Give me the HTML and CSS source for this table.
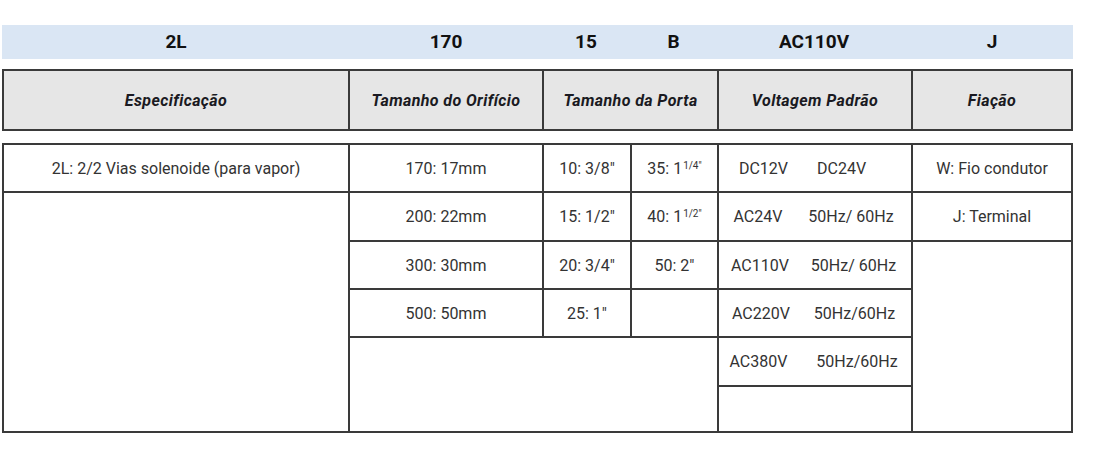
FILE: index.html
```html
<!DOCTYPE html>
<html lang="pt">
<head>
<meta charset="utf-8">
<title>Código do produto</title>
<link rel="stylesheet" href="styles.css">
</head>
<body>
<div class="code-bar">
  <div class="code">2L</div>
  <div class="code">170</div>
  <div class="code">15</div>
  <div class="code">B</div>
  <div class="code">AC110V</div>
  <div class="code">J</div>
</div>

<div class="grid head">
  <div class="cell th">Especificação</div>
  <div class="cell th">Tamanho do Orifício</div>
  <div class="cell th span2">Tamanho da Porta</div>
  <div class="cell th">Voltagem Padrão</div>
  <div class="cell th">Fiação</div>
</div>

<div class="grid body">
  <div class="cell c1 r1">2L: 2/2 Vias solenoide (para vapor)</div>
  <div class="cell c1 r2-end"></div>

  <div class="cell c2 r1">170: 17mm</div>
  <div class="cell c2 r2">200: 22mm</div>
  <div class="cell c2 r3">300: 30mm</div>
  <div class="cell c2 r4">500: 50mm</div>

  <div class="cell c3 r1">10: 3/8"</div>
  <div class="cell c3 r2">15: 1/2"</div>
  <div class="cell c3 r3">20: 3/4"</div>
  <div class="cell c3 r4">25: 1"</div>

  <div class="cell c4 r1">35: 1<sup class="frac">1/4"</sup></div>
  <div class="cell c4 r2">40: 1<sup class="frac">1/2"</sup></div>
  <div class="cell c4 r3">50: 2"</div>
  <div class="cell c4 r4"></div>

  <div class="cell c2-4 r5-6"></div>

  <div class="cell c5 r1 volt volt-dc"><span>DC12V</span><span>DC24V</span></div>
  <div class="cell c5 r2 volt volt-g26"><span>AC24V</span><span>50Hz/ 60Hz</span></div>
  <div class="cell c5 r3 volt volt-g22"><span>AC110V</span><span>50Hz/ 60Hz</span></div>
  <div class="cell c5 r4 volt volt-g24"><span>AC220V</span><span>50Hz/60Hz</span></div>
  <div class="cell c5 r5 volt volt-g29"><span>AC380V</span><span>50Hz/60Hz</span></div>
  <div class="cell c5 r6"></div>

  <div class="cell c6 r1">W: Fio condutor</div>
  <div class="cell c6 r2">J: Terminal</div>
  <div class="cell c6 r3-6"></div>
</div>
</body>
</html>
```

FILE: styles.css
```css
html, body {
  margin: 0;
  padding: 0;
  background: #ffffff;
}

body {
  font-family: Roboto, "Liberation Sans", Arial, sans-serif;
  color: #333333;
}

.code-bar {
  margin: 25px 0 0 2px;
  width: 1071px;
  height: 34px;
  background: #dae6f4;
  display: grid;
  grid-template-columns: 348px 192px 88px 87px 194px 162px;
  align-items: center;
}

.code {
  text-align: center;
  font-weight: 700;
  font-size: 19px;
  color: #111111;
  line-height: 34px;
}

.grid {
  margin-left: 2px;
  width: 1071px;
  box-sizing: border-box;
  display: grid;
  grid-template-columns: 344px 192px 86px 85px 192px 158px;
  gap: 2px;
  padding: 2px;
  background: #3a3a3a;
}

.head {
  margin-top: 10px;
  grid-template-rows: 58px;
}

.body {
  margin-top: 12px;
  grid-template-rows: 46px 47px 46px 46px 47px 44px;
}

.cell {
  background: #ffffff;
  display: flex;
  align-items: center;
  justify-content: center;
  font-size: 16px;
  white-space: nowrap;
}

.th {
  background: #e6e6e6;
  font-weight: 700;
  font-style: italic;
  font-size: 16px;
  letter-spacing: 0.4px;
  color: #1a1a22;
}

.span2 { grid-column: span 2; }

.c1 { grid-column: 1; }
.c2 { grid-column: 2; }
.c3 { grid-column: 3; }
.c4 { grid-column: 4; }
.c5 { grid-column: 5; }
.c6 { grid-column: 6; }
.c2-4 { grid-column: 2 / 5; }

.r1 { grid-row: 1; }
.r2 { grid-row: 2; }
.r3 { grid-row: 3; }
.r4 { grid-row: 4; }
.r5 { grid-row: 5; }
.r6 { grid-row: 6; }
.r2-end { grid-row: 2 / 7; }
.r3-6 { grid-row: 3 / 7; }
.r5-6 { grid-row: 5 / 7; }

.frac {
  font-size: 10px;
  position: relative;
  top: -3px;
  margin-left: 1px;
}

.volt {
  padding-right: 3px;
}

.volt-g22 { gap: 22px; }
.volt-g24 { gap: 24px; }
.volt-g26 { gap: 26px; }
.volt-g29 { gap: 29px; }

.volt-dc {
  padding-right: 25px;
  gap: 29px;
}
```
